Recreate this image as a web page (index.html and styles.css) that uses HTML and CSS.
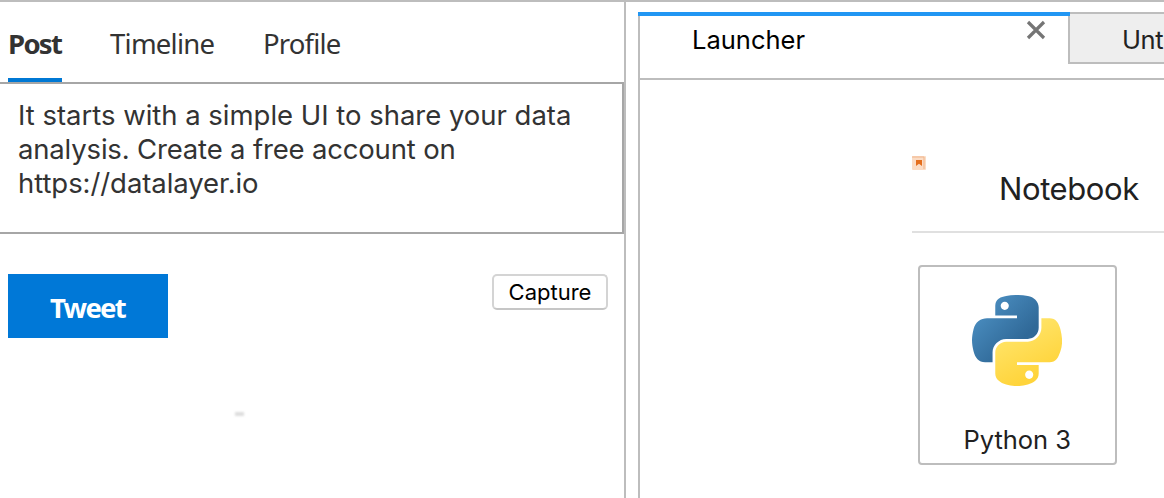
FILE: index.html
```
<!DOCTYPE html>
<html lang="en">
<head>
<meta charset="utf-8">
<title>Datalayer</title>
<link rel="stylesheet" href="styles.css">
</head>
<body>
<div class="app">
  <section class="side">
    <nav class="pivot">
      <a class="pivot-link active"><span class="t-post">Post</span></a>
      <a class="pivot-link"><span class="t-timeline">Timeline</span></a>
      <a class="pivot-link"><span class="t-profile">Profile</span></a>
    </nav>
    <div class="message"><span class="m1">It starts with a simple UI to share your data</span><br><span class="m2">analysis. Create a free account on</span><br><span class="m3">https://datalayer.io</span></div>
    <div class="actions">
      <button class="tweet">Tweet</button>
      <button class="capture">Capture</button>
    </div>
    <div class="speck"></div>
  </section>
  <main class="dock">
    <div class="tabs">
      <div class="tab current">
        <span class="t-launcher">Launcher</span>
        <svg class="close" viewBox="0 0 20 20"><path d="M2 2L18 18M18 2L2 18"/></svg>
      </div>
      <div class="tab other"><span class="t-unt">Unt</span></div>
    </div>
    <div class="launcher">
      <header class="section-head">
        <svg class="book" viewBox="0 0 14 14"><rect class="book-bg" width="14" height="14" rx="1"/><path class="book-frame" d="M0 1H12V13"/><path class="book-mark" d="M4 4H10V10L7 7.7L4 10Z"/></svg>
        <h2>Notebook</h2>
      </header>
      <div class="card">
        <svg class="python" viewBox="12.8 2 102.3 103.4" preserveAspectRatio="none">
          <defs>
            <linearGradient id="blue" x1="0" y1="0" x2="1" y2="1"><stop offset="0" stop-color="#5298cc"/><stop offset="0.7" stop-color="#306998"/></linearGradient>
            <linearGradient id="yellow" x1="0.7" y1="0.8" x2="0.4" y2="0.2"><stop offset="0" stop-color="#ffd43b"/><stop offset="1" stop-color="#ffe263"/></linearGradient>
          </defs>
          <path fill="url(#blue)" d="M63.391 1.988c-4.222.02-8.252.379-11.8 1.007-10.45 1.846-12.346 5.71-12.346 12.837v9.411h24.693v3.137H29.977c-7.176 0-13.46 4.313-15.426 12.521-2.268 9.405-2.368 15.275 0 25.096 1.755 7.311 5.947 12.519 13.124 12.519h8.491V67.234c0-8.151 7.051-15.34 15.426-15.34h24.665c6.866 0 12.346-5.654 12.346-12.548V15.833c0-6.693-5.646-11.72-12.346-12.837-4.244-.706-8.645-1.027-12.866-1.008zM50.037 9.557c2.55 0 4.634 2.117 4.634 4.721 0 2.593-2.083 4.69-4.634 4.69-2.56 0-4.633-2.097-4.633-4.69-.001-2.604 2.073-4.721 4.633-4.721z"/>
          <path fill="url(#yellow)" d="M91.682 28.38v10.966c0 8.5-7.208 15.655-15.426 15.655H51.591c-6.756 0-12.346 5.783-12.346 12.549v23.515c0 6.691 5.818 10.628 12.346 12.547 7.816 2.297 15.312 2.713 24.665 0 6.216-1.801 12.346-5.423 12.346-12.547v-9.412H63.938v-3.138h37.012c7.176 0 9.852-5.005 12.348-12.519 2.578-7.735 2.467-15.174 0-25.096-1.774-7.145-5.161-12.521-12.348-12.521h-9.268zM77.809 87.927c2.561 0 4.634 2.097 4.634 4.692 0 2.602-2.074 4.719-4.634 4.719-2.55 0-4.633-2.117-4.633-4.719 0-2.595 2.083-4.692 4.633-4.692z"/>
        </svg>
        <span class="t-python">Python 3</span>
      </div>
    </div>
  </main>
</div>
</body>
</html>
```

FILE: styles.css
```
* { box-sizing: border-box; }
body { margin: 0; width: 1164px; height: 498px; overflow: hidden; background: #fff; font-family: Inter, "Liberation Sans", sans-serif; }
span, h2, button { white-space: nowrap; }
.app { display: flex; height: 498px; border-top: 2px solid #bdbdbd; }
.side { width: 626px; flex: none; border-right: 2px solid #bdbdbd; }
.pivot { display: flex; height: 80px; padding-left: 8px; gap: 48px; font: 27.5px/80px "Noto Sans", sans-serif; color: #333; }
.pivot-link { height: 80px; line-height: 84px; }
.pivot-link.active { width: 54px; border-bottom: 4px solid #0078d4; font-weight: 700; }
.pivot-link:nth-child(2) { width: 105px; }
.t-post { letter-spacing: -1.7px; }
.t-timeline { letter-spacing: -0.75px; }
.t-profile { letter-spacing: -0.85px; }
.message { height: 152px; border: 2px solid #a6a6a6; border-left: 0; padding: 14px 0 0 18px; font-size: 27.5px; line-height: 34px; color: #333; }
.m1 { letter-spacing: -0.02px; }
.m2 { letter-spacing: -0.17px; }
.m3 { letter-spacing: -0.07px; }
.actions { display: flex; justify-content: space-between; padding: 40px 16px 0 8px; }
.tweet { width: 160px; height: 64px; border: 0; padding: 4px 1px 0 0; background: #0078d7; color: #fff; font: 700 27.5px/60px "Noto Sans", sans-serif; letter-spacing: -1.7px; }
.capture { width: 116px; height: 36px; border: 2px solid #d4d4d4; border-bottom-color: #c6c6c6; border-radius: 5px; padding: 0; background: #fff; color: #000; font: 22px/30px Inter, sans-serif; }
.speck { width: 9px; height: 4px; margin: 74px 0 0 235px; background: #ddd; filter: blur(1px); }
.dock { flex: 1; min-width: 0; margin: 10px 0 0 12px; overflow: hidden; }
.tabs { display: flex; height: 68px; border-left: 2px solid #bdbdbd; border-bottom: 2px solid #bdbdbd; font-size: 25.5px; line-height: 30px; }
.tab { flex: none; }
.current { position: relative; z-index: 1; display: flex; justify-content: space-between; width: 432px; height: 52px; margin-left: -2px; border-top: 4px solid #2196f3; padding: 4px 24px 0 54px; color: #000; }
.t-launcher { margin-top: 5px; }
.close { width: 20px; height: 20px; fill: none; stroke: #757575; stroke-width: 3.2; }
.other { width: 200px; height: 52px; margin-left: -2px; border: 2px solid #bdbdbd; background: #eee; padding: 11px 0 0 52px; color: #222; letter-spacing: -0.4px; }
.launcher { height: 418px; border-left: 2px solid #bdbdbd; padding: 76px 0 0 272px; }
.section-head { display: flex; height: 77px; border-bottom: 2px solid #e0e0e0; }
.book { width: 14px; height: 14px; flex: none; filter: blur(0.4px); }
.book-bg { fill: #fbdcc5; }
.book-frame { fill: none; stroke: #f0b58c; }
.book-mark { fill: #e46e1d; }
h2 { margin: 12px 0 0 73px; font-size: 31px; line-height: 42px; font-weight: 400; letter-spacing: -0.4px; color: #212121; }
.card { display: flex; flex-direction: column; align-items: center; width: 199.5px; height: 200px; margin: 32px 0 0 5.5px; border: 2px solid #bdbdbd; border-radius: 4px; padding-top: 28px; color: #212121; font-size: 25.5px; line-height: 32px; }
.python { width: 90px; height: 91px; margin-left: -1px; }
.t-python { margin-top: 38px; }
```
